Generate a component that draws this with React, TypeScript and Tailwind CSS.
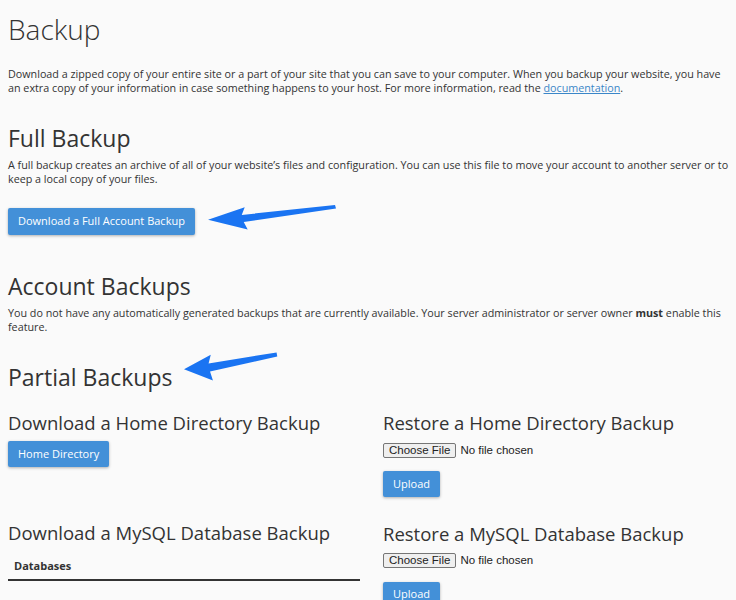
import React from 'react';

const Arrow = ({ className }: { className: string }) => (
  <svg className={className} viewBox="0 0 130 40" preserveAspectRatio="none" fill="#1a74f2">
    <path d="M128 3 L34 17 L37 6 L0 24 L40 38 L36 27 L129 8 Z" />
  </svg>
);

const FileInput = () => (
  <div className="flex items-center gap-[4px] text-[11.5px] text-[#222]" style={{ fontFamily: '"Liberation Sans", Arial, sans-serif' }}>
    <span className="border border-[#767676] bg-[#efefef] rounded-[2px] px-[5px] leading-[13px]">Choose File</span>
    <span>No file chosen</span>
  </div>
);

const BlueButton = ({ children, className = '' }: { children: React.ReactNode; className?: string }) => (
  <button className={`bg-[#4390d8] text-white text-[11px] rounded-[2px] shadow-[0_1px_3px_rgba(0,0,0,0.3)] ${className}`}>
    {children}
  </button>
);

export default function App() {
  return (
    <div className="relative min-h-[600px] bg-[#fafafa] text-[#333] pl-[8px] pr-[4px] overflow-hidden" style={{ fontFamily: '"Open Sans", sans-serif' }}>
      <h1 className="text-[28px] font-light leading-[36px] pt-[11px]">Backup</h1>
      <p className="text-[10.75px] leading-[14px] mt-[20px]">
        Download a zipped copy of your entire site or a part of your site that you can save to your computer. When you backup your website, you have an extra copy of your information in case something happens to your host. For more information, read the{' '}
        <a className="text-[#3a86c8] underline">documentation</a>.
      </p>

      <h2 className="text-[23px] leading-[30px] mt-[28px]">Full Backup</h2>
      <p className="text-[10.75px] leading-[14px] mt-[5px]">
        A full backup creates an archive of all of your website’s files and configuration. You can use this file to move your account to another server or to keep a local copy of your files.
      </p>
      <BlueButton className="mt-[22px] h-[27px] px-[10px]">Download a Full Account Backup</BlueButton>

      <h2 className="text-[23px] leading-[30px] mt-[36px]">Account Backups</h2>
      <p className="text-[10.75px] leading-[14px] mt-[5px]">
        You do not have any automatically generated backups that are currently available. Your server administrator or server owner <b>must</b> enable this feature.
      </p>

      <h2 className="text-[23px] leading-[30px] mt-[28px]">Partial Backups</h2>

      <div className="grid grid-cols-[352px_1fr] gap-x-[23px] mt-[19px]">
        <div>
          <h3 className="text-[18.5px] leading-[24px]">Download a Home Directory Backup</h3>
          <BlueButton className="mt-[6px] h-[26px] px-[10px]">Home Directory</BlueButton>
          <h3 className="text-[18.5px] leading-[24px] mt-[54px]">Download a MySQL Database Backup</h3>
          <div className="mt-[13px] border-b-2 border-[#333] px-[6px] pb-[4px] text-[11px] font-bold">Databases</div>
        </div>
        <div>
          <h3 className="text-[18.5px] leading-[24px]">Restore a Home Directory Backup</h3>
          <div className="mt-[7px]"><FileInput /></div>
          <BlueButton className="mt-[12px] h-[26px] px-[10px]">Upload</BlueButton>
          <h3 className="text-[18.5px] leading-[24px] mt-[25px]">Restore a MySQL Database Backup</h3>
          <div className="mt-[6px]"><FileInput /></div>
          <BlueButton className="mt-[12px] h-[26px] px-[10px]">Upload</BlueButton>
        </div>
      </div>

      <Arrow className="absolute left-[208px] top-[203px] w-[129px] h-[28px]" />
      <Arrow className="absolute left-[184px] top-[350px] w-[94px] h-[32px]" />
    </div>
  );
}
